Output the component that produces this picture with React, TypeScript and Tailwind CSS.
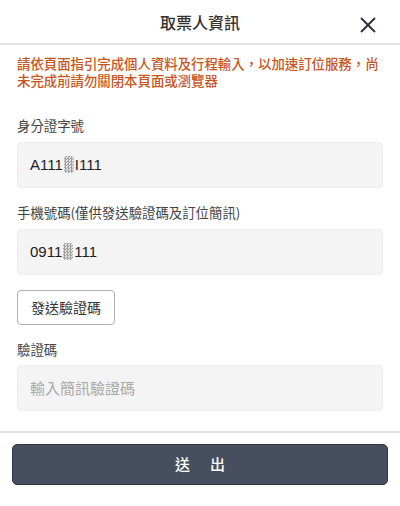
import React from "react";

const font = {
  fontFamily: '"Noto Sans CJK TC", "Noto Sans", sans-serif',
};

// blurred digit, as in the screenshot
const Masked = () => (
  <span className="mx-[1px] inline-block h-[17px] w-[10px] rounded-[3px] bg-[repeating-conic-gradient(#8a8a8a_0_25%,#e2e2e2_0_50%)] bg-[length:3px_3px] align-[-3px] opacity-80 blur-[0.4px]" />
);

const Field = ({ children, placeholder }: { children?: React.ReactNode; placeholder?: string }) => (
  <div className="flex h-[46px] items-center rounded-[4px] border border-[#ececec] bg-[#f4f4f4] px-[12px] text-[15px] text-[#222]">
    {children ? (
      <span style={{ fontFamily: '"Liberation Sans", "Noto Sans CJK TC", sans-serif' }}>{children}</span>
    ) : (
      <span className="text-[#aaaaaa]">{placeholder}</span>
    )}
  </div>
);

const Label = ({ text }: { text: string }) => (
  <p className="text-[13.4px] leading-[17px] text-[#444]">{text}</p>
);

export default function App() {
  return (
    <div className="flex h-[506px] w-[400px] flex-col bg-white" style={font}>
      <div className="relative flex h-[45px] shrink-0 items-center justify-center border-b-2 border-[#e4e4e4]">
        <h1 className="text-[16px] font-medium text-[#333]">取票人資訊</h1>
        <button className="absolute right-[24px] top-[17px] text-[#2d3340]">
          <svg width="16" height="16" viewBox="0 0 16 16" fill="none" stroke="currentColor" strokeWidth="2">
            <path d="M1 1 L15 15 M15 1 L1 15" />
          </svg>
        </button>
      </div>

      <div className="flex flex-1 flex-col px-[17px]">
        <p className="mt-[10px] text-[13.4px] font-medium leading-[17px] text-[#c8561c]">
          請依頁面指引完成個人資料及行程輸入，以加速訂位服務，尚未完成前請勿關閉本頁面或瀏覽器
        </p>

        <div className="mt-[28px]">
          <Label text="身分證字號" />
        </div>
        <div className="mt-[8px]">
          <Field>
            A111<Masked />I111
          </Field>
        </div>

        <div className="mt-[16px]">
          <Label text="手機號碼(僅供發送驗證碼及訂位簡訊)" />
        </div>
        <div className="mt-[8px]">
          <Field>
            0911<Masked />111
          </Field>
        </div>

        <div className="mt-[15px]">
          <button className="h-[35px] rounded-[4px] border border-[#b0b0b0] bg-white px-[13px] text-[14px] text-[#333]">
            發送驗證碼
          </button>
        </div>

        <div className="mt-[16px]">
          <Label text="驗證碼" />
        </div>
        <div className="mt-[7px]">
          <Field placeholder="輸入簡訊驗證碼" />
        </div>
      </div>

      <div className="shrink-0 border-t-2 border-[#e0e0e6] px-[12px] pt-[11px] pb-[21px]">
        <button className="flex h-[41px] w-full items-center justify-center rounded-[5px] border border-[#2f3542] bg-[#464e5f] text-[15px] font-medium tracking-[20px] text-white">
          <span className="pl-[20px]">送出</span>
        </button>
      </div>
    </div>
  );
}
